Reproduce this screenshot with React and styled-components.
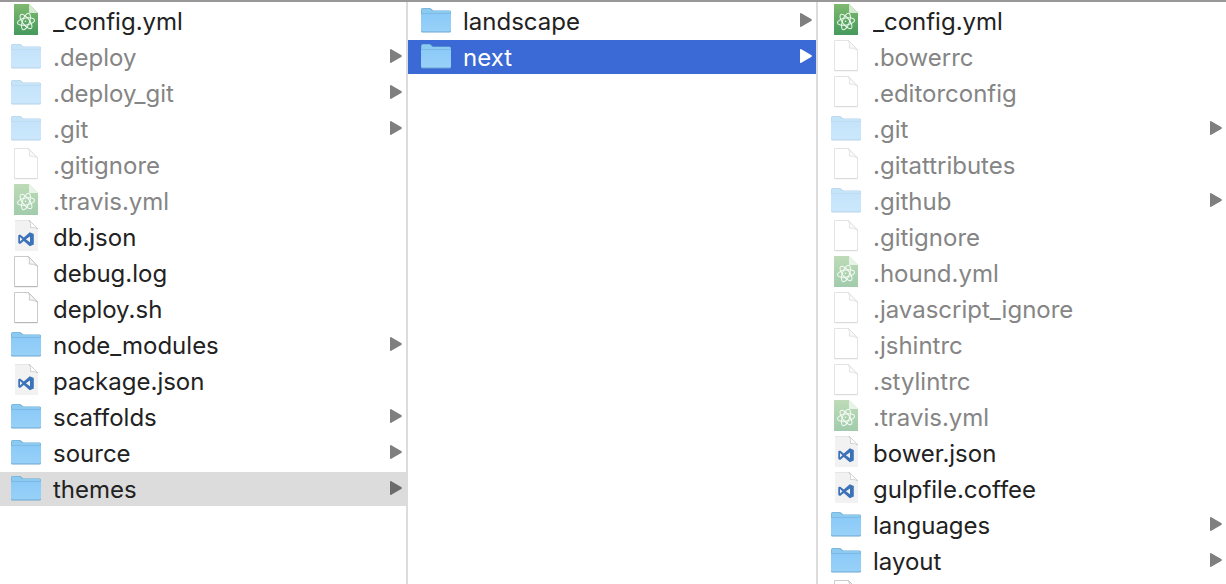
import React, { useState } from "react";
import styled, { createGlobalStyle } from "styled-components";

const GlobalStyle = createGlobalStyle`
  * { box-sizing: border-box; }
  body {
    margin: 0;
    background: #fff;
    font-family: Inter, "Liberation Sans", sans-serif;
  }
`;

const Browser = styled.main`
  display: grid;
  grid-template-columns: 408fr 410fr 408fr;
  height: 100vh;
  overflow: hidden;
  border-top: 2px solid #999797;
`;

const Column = styled.ul`
  min-width: 0;
  margin: 0;
  padding: 2px 0 0;
  list-style: none;
  display: flex;
  flex-direction: column;
  gap: 2px;
  overflow: hidden;
  border-right: ${(p) => (p.$last ? "0" : "2px solid #dcdcdc")};
`;

const Item = styled.li`
  flex: none;
`;

const tones = {
  none: { back: "transparent", arrow: "#7f7f7f" },
  path: { back: "#dcdcdc", arrow: "#6b6b6b" },
  active: { back: "#3b69d6", arrow: "#fff" },
};

const Row = styled.button`
  display: flex;
  align-items: center;
  width: 100%;
  height: 34px;
  padding: 0 4px 0 ${(p) => (p.$first ? "10px" : "12px")};
  border: 0;
  background: ${(p) => tones[p.$tone].back};
  color: ${(p) => (p.$tone === "active" ? "#fff" : p.$dim ? "#858585" : "#222")};
  font: inherit;
  font-size: 24px;
  line-height: 32px;
  text-align: left;
`;

const Icon = styled.svg`
  flex: none;
  width: 32px;
  height: 34px;
  margin-right: 11px;
  opacity: ${(p) => (p.$dim ? 0.5 : 1)};
`;

const Name = styled.span`
  flex: 1;
  min-width: 0;
  padding-top: 2px;
  white-space: nowrap;
  overflow: hidden;
  text-overflow: ellipsis;
`;

const Arrow = styled.svg`
  flex: none;
  width: 12px;
  height: 14px;
  margin-bottom: 2px;
  fill: ${(p) => tones[p.$tone].arrow};
`;

function FolderShape() {
  return (
    <>
      <path d="M1 27V6q0-2 2-2h6.500q1 0 1.700.700L13 6.500h16.500q1.500 0 1.500 1.500v19q0 1.500-1.500 1.500h-27Q1 28.500 1 27z" fill="#6ba5cf" />
      <path d="M1.500 9V6q0-1.500 1.500-1.500h6.500L12.500 7h17q1 0 1 1v2z" fill="#8ccbf1" />
      <path d="M1 9.500h30V26q0 1.500-1.500 1.500h-27Q1 27.500 1 26z" fill="url(#folderFace)" />
      <path d="M1.500 9.500h29" stroke="#7dbbe6" strokeWidth="1" />
    </>
  );
}

function FileShape() {
  return (
    <>
      <path d="M4.500 30.500V.500h14l9 9.500v20.500z" fill="#fff" stroke="#cacaca" />
      <path d="M4.500 30.700h23" stroke="#b4b4b4" />
      <path d="M18.500.500q2 4 .700 7.500 4-.500 8.300 2z" fill="#f6f6f6" stroke="#bcbcbc" strokeWidth=".8" />
    </>
  );
}

function CodeShape() {
  return (
    <>
      <path d="M5 0h14l9 9v22H5z" fill="#f2f2f2" />
      <path d="M5 .300h14" stroke="#d8d8d8" strokeWidth=".6" />
      <path d="M19 0l9 9q-3-2-7.500-1.500Q21.500 3.500 19 0z" fill="#fff" stroke="#c2c2c2" strokeWidth=".7" />
      <path
        fillRule="evenodd"
        d="M19.800 12.200l4 1.800v10.500l-4 1.800-6-5.400-3.800 3-1.700-.8v-7.800l1.700-.8 3.800 3zM20 16.400l-4.100 2.900 4.100 2.900zM10 17v4.500l2.400-2.250z"
        fill="#3c72b8"
      />
    </>
  );
}

function AtomShape() {
  return (
    <>
      <path d="M4 0h15l9 9v22H4z" fill="url(#atomPage)" />
      <path d="M19 0l9 9h-7.500Q19 9 19 7.500z" fill="#d3ead0" />
      <g fill="none" stroke="#eefaf0" strokeWidth="1">
        <ellipse cx="16" cy="17.500" rx="8.700" ry="3.500" transform="rotate(-10 16 17.500)" />
        <ellipse cx="16" cy="17.500" rx="8.700" ry="3.500" transform="rotate(52 16 17.500)" />
        <ellipse cx="16" cy="17.500" rx="8.700" ry="3.500" transform="rotate(110 16 17.500)" />
      </g>
      <circle cx="15.500" cy="17.300" r=".8" fill="#eefaf0" />
    </>
  );
}

const shapes = { folder: FolderShape, file: FileShape, code: CodeShape, atom: AtomShape };

function Gradients() {
  return (
    <defs>
      <linearGradient id="folderFace" x1="0" y1="0" x2="0" y2="1">
        <stop offset="0" stopColor="#8bcaf8" />
        <stop offset="1" stopColor="#98d1f8" />
      </linearGradient>
      <linearGradient id="atomPage" x1="0" y1="0" x2="0" y2="1">
        <stop offset="0" stopColor="#7fb96f" />
        <stop offset="1" stopColor="#459a5c" />
      </linearGradient>
    </defs>
  );
}

const columns = [
  [
    ["_config.yml", "atom"],
    [".deploy", "folder"],
    [".deploy_git", "folder"],
    [".git", "folder"],
    [".gitignore", "file"],
    [".travis.yml", "atom"],
    ["db.json", "code"],
    ["debug.log", "file"],
    ["deploy.sh", "file"],
    ["node_modules", "folder"],
    ["package.json", "code"],
    ["scaffolds", "folder"],
    ["source", "folder"],
    ["themes", "folder"],
  ],
  [
    ["landscape", "folder"],
    ["next", "folder"],
  ],
  [
    ["_config.yml", "atom"],
    [".bowerrc", "file"],
    [".editorconfig", "file"],
    [".git", "folder"],
    [".gitattributes", "file"],
    [".github", "folder"],
    [".gitignore", "file"],
    [".hound.yml", "atom"],
    [".javascript_ignore", "file"],
    [".jshintrc", "file"],
    [".stylintrc", "file"],
    [".travis.yml", "atom"],
    ["bower.json", "code"],
    ["gulpfile.coffee", "code"],
    ["languages", "folder"],
    ["layout", "folder"],
    ["", "file"],
  ],
];

function Entry({ name, kind, tone, first, onSelect }) {
  const Shape = shapes[kind];
  const dim = name.startsWith(".");
  return (
    <Item>
      <Row type="button" $first={first} $dim={dim} $tone={tone} onClick={onSelect}>
        <Icon viewBox="0 0 32 34" $dim={dim} aria-hidden="true">
          <Gradients />
          <Shape />
        </Icon>
        <Name>{name}</Name>
        {kind === "folder" && (
          <Arrow viewBox="0 0 12 14" $tone={tone} aria-hidden="true">
            <path d="M0 1q0-1.300 1.300-.700l9.900 5.700q1.300 1 0 2l-9.900 5.700Q0 14.300 0 13z" />
          </Arrow>
        )}
      </Row>
    </Item>
  );
}

export default function App() {
  const [selected, setSelected] = useState(["themes", "next", null]);
  const active = selected[2] ? 2 : selected[1] ? 1 : 0;

  const select = (column, name) =>
    setSelected((now) => now.map((old, i) => (i < column ? old : i === column ? name : null)));

  return (
    <>
      <GlobalStyle />
      <Browser>
        {columns.map((entries, column) => (
          <Column key={column} $last={column === columns.length - 1}>
            {entries.map(([name, kind]) => (
              <Entry
                key={name}
                name={name}
                kind={kind}
                first={column === 0}
                tone={selected[column] !== name ? "none" : column === active ? "active" : "path"}
                onSelect={() => select(column, name)}
              />
            ))}
          </Column>
        ))}
      </Browser>
    </>
  );
}
